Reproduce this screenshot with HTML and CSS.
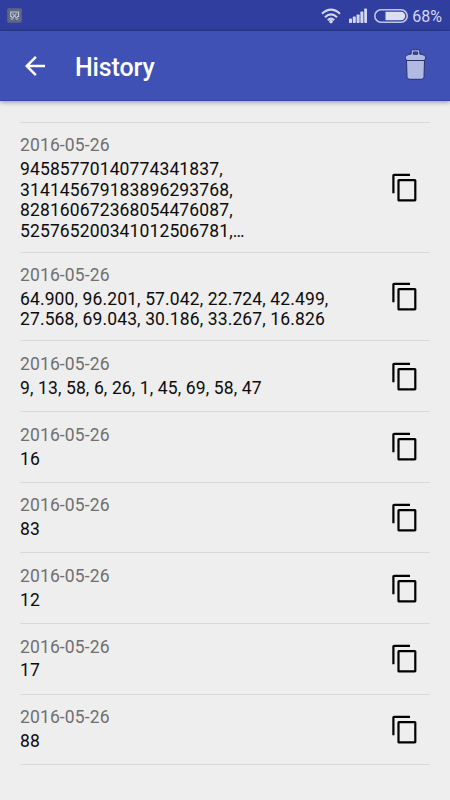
FILE: index.html
```html
<!DOCTYPE html>
<html lang="en">
<head>
<meta charset="utf-8">
<title>History</title>
<link rel="stylesheet" href="styles.css">
</head>
<body>
<svg class="defs" aria-hidden="true">
  <symbol id="copy" viewBox="0 0 30 30"><path d="M3.400 20.200V2.500q0-.7.700-.7H20M8.900 7.200h16a.4.400 0 0 1 .4.400v19.400a.4.400 0 0 1-.4.400h-16a.4.400 0 0 1-.4-.4V7.600a.4.400 0 0 1 .4-.4z"/></symbol>
</svg>
<div class="status">
  <svg class="notice" width="15" height="15" viewBox="0 0 15 15">
    <rect x=".5" y=".5" width="14" height="14" rx="1.500" fill="#606685" stroke="#555d8c"/>
    <path d="M5 8.500H3.700V4h7.800v4.500H10M5.500 5.500l4 4.500M9.500 5.500l-4 4.500" fill="none" stroke="#c5c8d7" stroke-width="1.100"/>
    <circle cx="5" cy="10.500" r="1" fill="none" stroke="#c5c8d7" stroke-width=".8"/>
    <circle cx="10" cy="10.500" r="1" fill="none" stroke="#c5c8d7" stroke-width=".8"/>
  </svg>
  <div class="indicators">
    <svg width="20" height="16" viewBox="0 0 20 16" fill="none" stroke="#d3d7ef" stroke-width="2.200">
      <path d="M1 5.700Q10-2.500 19 5.700M4 9.200Q10 3.500 16 9.200M6.800 12.200Q10 9.200 13.200 12.200"/>
      <circle cx="10" cy="13.600" r="1.800" fill="#d3d7ef" stroke="none"/>
    </svg>
    <svg class="signal" width="18" height="15" viewBox="0 0 18 15" fill="#d3d7ef">
      <rect x="0" y="10.500" width="3" height="4.500" rx=".7"/><rect x="3.800" y="8.500" width="3" height="6.500" rx=".7"/><rect x="7.600" y="6.500" width="3" height="8.500" rx=".7"/><rect x="11.400" y="3.500" width="3" height="11.500" rx=".7"/><rect x="15.200" y=".5" width="2.800" height="14.500" rx=".7"/>
    </svg>
    <svg class="battery" width="34" height="14" viewBox="0 0 34 14">
      <rect x=".8" y=".8" width="32.400" height="12.400" rx="6.200" fill="none" stroke="#c0c5e7" stroke-width="1.600"/>
      <path d="M11.500 2.800H27a4.200 4.200 0 0 1 0 8.400H11.500z" fill="#dcdff2"/>
    </svg>
    <span class="percent">68%</span>
  </div>
</div>
<header class="toolbar">
  <svg class="back" width="30" height="30" viewBox="0 0 24 24" fill="#fff"><path d="M20 11H7.830l5.590-5.590L12 4l-8 8 8 8 1.410-1.410L7.830 13H20v-2z"/></svg>
  <h1>History</h1>
  <svg class="trash" width="24" height="32" viewBox="0 0 24 32" fill="#b2b9e2" stroke="#25316f" stroke-width="1">
    <path d="M3.500 11h18l-.5 16.500c-.1 1.700-1.300 2.800-3 2.800H7c-1.700 0-2.900-1-3-2.800z"/>
    <path fill-rule="evenodd" d="M8.200 5.100V2Q8.200.8 9.400.8h6.200Q16.800.8 16.800 2v3.100c3.500.3 6 1.700 6 3.900 0 1.600-1.300 2.500-2.800 2.500H5C3.500 11.500 2.200 10.600 2.200 9c0-2.200 2.500-3.600 6-3.900zM10.400 3v2.300h4.200V3z"/>
  </svg>
</header>
<main class="list">
  <article class="row row-four"><div class="text"><time>2016-05-26</time><p>94585770140774341837,<br>314145679183896293768,<br>828160672368054476087,<br>525765200341012506781,…</p></div><svg class="copy"><use href="#copy"/></svg></article>
  <article class="row row-two"><div class="text"><time>2016-05-26</time><p>64.900, 96.201, 57.042, 22.724, 42.499,<br>27.568, 69.043, 30.186, 33.267, 16.826</p></div><svg class="copy"><use href="#copy"/></svg></article>
  <article class="row"><div class="text"><time>2016-05-26</time><p>9, 13, 58, 6, 26, 1, 45, 69, 58, 47</p></div><svg class="copy"><use href="#copy"/></svg></article>
  <article class="row"><div class="text"><time>2016-05-26</time><p>16</p></div><svg class="copy"><use href="#copy"/></svg></article>
  <article class="row"><div class="text"><time>2016-05-26</time><p>83</p></div><svg class="copy"><use href="#copy"/></svg></article>
  <article class="row"><div class="text"><time>2016-05-26</time><p>12</p></div><svg class="copy"><use href="#copy"/></svg></article>
  <article class="row"><div class="text"><time>2016-05-26</time><p>17</p></div><svg class="copy"><use href="#copy"/></svg></article>
  <article class="row"><div class="text"><time>2016-05-26</time><p>88</p></div><svg class="copy"><use href="#copy"/></svg></article>
</main>
</body>
</html>
```
FILE: styles.css
```css
* { box-sizing: border-box; }
body { margin: 0; height: 800px; overflow: hidden; background: #eee; font-family: Roboto, sans-serif; color: #0c0c0c; }
.defs { display: none; }
.status { height: 31px; background: #303f9f; border-bottom: 1px solid #2d3b93; padding: 1px 8px 0 7px; display: flex; align-items: center; justify-content: space-between; }
.indicators { display: flex; align-items: center; }
.signal { margin-left: 8px; }
.battery { margin-left: 7px; }
.percent { margin: 2px 0 0 4px; font-size: 16px; line-height: 20px; color: #d3d7ef; }
.toolbar { height: 70px; background: #3f51b5; border-bottom: 1px solid #3346b0; padding: 0 23px 0 20px; display: flex; align-items: center; box-shadow: 0 1px 5px rgba(0, 0, 0, .4); }
h1 { margin: 5px 0 0 25px; font-size: 25px; letter-spacing: -.12px; line-height: 30px; font-weight: 500; color: #fff; }
.trash { margin: 0 0 1px auto; }
.list { margin: 21px 20px 0; border-top: 1px solid #d9d9d9; }
.row { height: 70.650px; border-bottom: 1px solid #d9d9d9; display: flex; align-items: center; justify-content: space-between; }
.row-four { height: 130px; }
.row-two { height: 88.400px; }
.row-four .text, .row-two .text { padding-top: 1.500px; }
.text { font-size: 17.500px; line-height: 20.500px; letter-spacing: .125px; }
time { display: block; color: #707070; margin-bottom: 3.300px; }
p { margin: 0; white-space: nowrap; }
.copy { width: 30px; height: 30px; margin: 1px 10px 0 0; fill: none; stroke: #000; stroke-width: 2.200px; }
```
